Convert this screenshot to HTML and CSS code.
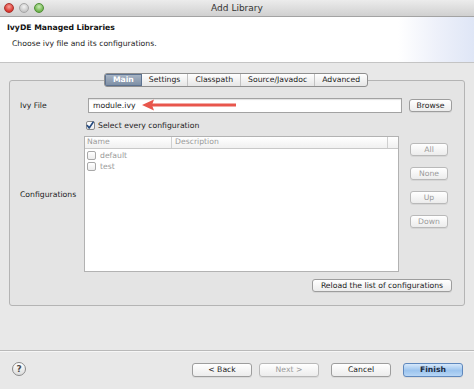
FILE: index.html
```html
<!DOCTYPE html>
<html lang="en">
<head>
  <meta charset="UTF-8" />
  <title>Add Library</title>
  <link rel="stylesheet" href="styles.css">
</head>
<body>

<div class="window">

  <div class="titlebar">
    <div class="lights">
      <span class="light close"></span>
      <span class="light mini"></span>
      <span class="light zoom"></span>
    </div>
    <div class="title">Add Library</div>
    <div></div>
  </div>

  <div class="banner">
    <h1>IvyDE Managed Libraries</h1>
    <p>Choose ivy file and its configurations.</p>
  </div>

  <div class="content">
    <fieldset class="folder">
      <legend class="tabs">
        <span class="tab active">Main</span>
        <span class="tab">Settings</span>
        <span class="tab">Classpath</span>
        <span class="tab">Source/Javadoc</span>
        <span class="tab">Advanced</span>
      </legend>

      <div class="ivy-row">
        <span class="field-label">Ivy File</span>
        <div class="input-wrap">
          <div class="input">module.ivy</div>
          <!-- red annotation arrow drawn over the field -->
          <svg class="arrow" width="96" height="12" viewBox="0 0 96 12">
            <path d="M95 6 H10" stroke="#e8564c" stroke-width="3" fill="none"/>
            <path d="M1 6 L13 0.5 L11 6 L13 11.5 Z" fill="#e8564c"/>
          </svg>
        </div>
        <button class="btn browse">Browse</button>
      </div>

      <div class="check-row">
        <span class="checkbox checked">
          <svg width="9" height="9" viewBox="0 0 9 9">
            <path d="M1.5 4.5 L3.6 7.3 L8 0.8" stroke="#244a80" stroke-width="1.8" fill="none" stroke-linecap="round" stroke-linejoin="round"/>
          </svg>
        </span>
        <span>Select every configuration</span>
      </div>

      <div class="config-row">
        <span class="field-label config-label">Configurations</span>
        <div class="table">
          <div class="table-head">
            <span class="col-name">Name</span>
            <span class="col-desc">Description</span>
            <span class="col-end"></span>
          </div>
          <div class="table-row"><span class="checkbox"></span>default</div>
          <div class="table-row"><span class="checkbox"></span>test</div>
        </div>
        <div class="side-buttons">
          <button class="btn disabled">All</button>
          <button class="btn disabled">None</button>
          <button class="btn disabled">Up</button>
          <button class="btn disabled">Down</button>
        </div>
      </div>

      <div class="reload-row">
        <button class="btn reload">Reload the list of configurations</button>
      </div>
    </fieldset>
  </div>

  <div class="footer">
    <span class="help">?</span>
    <div class="nav-buttons">
      <button class="btn nav">&lt; Back</button>
      <button class="btn nav disabled">Next &gt;</button>
      <button class="btn nav cancel">Cancel</button>
      <button class="btn nav finish">Finish</button>
    </div>
  </div>

</div>

</body>
</html>
```

FILE: styles.css
```css
body {
  margin: 0;
  padding: 0;
  font-family: "DejaVu Sans", Verdana, sans-serif;
  font-size: 7.7px;
  color: #1c1c1c;
  background: #e8e8e8;
}

.window {
  width: 474px;
  height: 389px;
  display: flex;
  flex-direction: column;
  background: #e8e8e8;
  overflow: hidden;
}

/* title bar */

.titlebar {
  height: 16px;
  display: grid;
  grid-template-columns: 1fr auto 1fr;
  align-items: center;
  background: linear-gradient(#ececec, #d0d0d0);
  border-bottom: 1px solid #a3a3a3;
}

.lights {
  display: flex;
  gap: 5px;
  padding-left: 4px;
}

.light {
  width: 10px;
  height: 10px;
  border-radius: 50%;
  box-sizing: border-box;
}

.light.close {
  background: radial-gradient(circle at 50% 35%, #f7a09a, #d9342c 70%);
  border: 1px solid #a8342e;
}

.light.mini {
  background: radial-gradient(circle at 50% 35%, #f2f2f2, #c6c6c6 70%);
  border: 1px solid #a6a6a6;
}

.light.zoom {
  background: radial-gradient(circle at 50% 35%, #c8ecb5, #6fb34d 70%);
  border: 1px solid #4f8e36;
}

.title {
  font-size: 9px;
  color: #333;
}

/* banner */

.banner {
  height: 46px;
  box-sizing: border-box;
  padding: 6px 0 0 7px;
  background: linear-gradient(to right, #ffffff 84%, #eef1fa 92%, #dfe6f6 100%);
  border-bottom: 1px solid #c4c4c4;
}

.banner h1 {
  margin: 0;
  font-size: 7.7px;
  line-height: 10px;
  font-weight: bold;
  color: #111;
}

.banner p {
  margin: 6px 0 0 5px;
  line-height: 10px;
}

/* tab folder */

.content {
  height: 287px;
  box-sizing: border-box;
  padding: 10px 9px 0;
}

.folder {
  margin: 0;
  min-width: 0;
  padding: 11px 12px 13px 10px;
  border: 1px solid #b4b4b4;
  border-radius: 3px;
  background: #e4e4e4;
}

.tabs {
  margin: 0 auto;
  padding: 0;
  display: flex;
  height: 14px;
  box-sizing: border-box;
  border: 1px solid #8f8f8f;
  border-radius: 3px;
  background: linear-gradient(#ffffff, #e6e6e6);
  overflow: hidden;
}

.tab {
  line-height: 12px;
  padding: 0 7px;
  border-left: 1px solid #c2c2c2;
}

.tab:first-child {
  border-left: none;
}

.tab.active {
  padding: 0 8px;
  color: #fff;
  font-weight: bold;
  background: linear-gradient(#aab7c7, #7a8ca3);
  box-shadow: inset 0 0 0 1px #5d7290;
}

.tab.active + .tab {
  border-left: none;
}

.field-label {
  width: 68px;
  flex-shrink: 0;
}

.ivy-row {
  height: 15px;
  display: flex;
  align-items: center;
}

.input-wrap {
  position: relative;
  width: 314px;
}

.input {
  height: 15px;
  box-sizing: border-box;
  padding: 0 4px;
  line-height: 13px;
  background: #fff;
  border: 1px solid #a2a2a2;
  box-shadow: inset 0 1px 1px rgba(0,0,0,0.12);
}

.arrow {
  position: absolute;
  left: 53px;
  top: 1px;
}

.btn {
  font-family: inherit;
  font-size: 7.7px;
  color: #1c1c1c;
  height: 13px;
  box-sizing: border-box;
  padding: 0;
  line-height: 11px;
  background: linear-gradient(#ffffff, #ececec);
  border: 1px solid #9d9d9d;
  border-radius: 3px;
  box-shadow: 0 1px 0 rgba(0,0,0,0.06);
}

.btn.disabled {
  color: #9a9a9a;
  border-color: #b9b9b9;
}

.browse {
  width: 43px;
  margin-left: 7px;
}

.check-row {
  margin-top: 7px;
  height: 10px;
  display: flex;
  align-items: center;
  gap: 3px;
  padding-left: 66px;
}

.checkbox {
  width: 9px;
  height: 9px;
  box-sizing: border-box;
  border: 1px solid #a8a8a8;
  border-radius: 2px;
  background: linear-gradient(#ffffff, #ededed);
  display: inline-flex;
  flex-shrink: 0;
}

.checkbox.checked {
  border-color: #8c8c8c;
}

.checkbox svg {
  margin: -1px 0 0 -1px;
}

.config-row {
  margin-top: 6px;
  height: 136px;
  display: flex;
}

.config-label {
  width: 64px;
  padding-top: 54px;
}

.table {
  width: 315px;
  box-sizing: border-box;
  background: #fff;
  border: 1px solid #b2b2b2;
  color: #9a9a9a;
}

.table-head {
  height: 11px;
  display: flex;
  line-height: 10px;
  background: linear-gradient(#ffffff, #f0f0f0);
  border-bottom: 1px solid #c8c8c8;
}

.col-name {
  width: 84px;
  padding-left: 2px;
  border-right: 1px solid #cfcfcf;
}

.col-desc {
  flex: 1;
  padding-left: 3px;
  border-right: 1px solid #cfcfcf;
}

.col-end {
  width: 10px;
}

.table-row {
  height: 11px;
  display: flex;
  align-items: center;
  gap: 4px;
  padding-left: 2px;
}

.table-head + .table-row {
  margin-top: 1px;
}

.side-buttons {
  margin-left: 11px;
  padding-top: 7px;
  display: flex;
  flex-direction: column;
  gap: 11px;
}

.side-buttons .btn {
  width: 38px;
}

.reload-row {
  margin-top: 7px;
  display: flex;
  justify-content: flex-end;
}

.reload {
  width: 140px;
}

/* footer */

.footer {
  flex: 1;
  display: flex;
  align-items: flex-start;
  padding: 12px 11px 0 12px;
  border-top: 1px solid #b9b9b9;
  box-shadow: inset 0 1px 0 #f6f6f6;
}

.help {
  width: 14px;
  height: 14px;
  margin-top: -1px;
  box-sizing: border-box;
  border: 1px solid #8a8a8a;
  border-radius: 50%;
  background: linear-gradient(#ffffff, #dcdcdc);
  color: #4a4a4a;
  font-weight: bold;
  font-size: 9px;
  line-height: 12px;
  text-align: center;
}

.nav-buttons {
  margin-left: auto;
  display: flex;
}

.nav {
  width: 60px;
  height: 14px;
  line-height: 12px;
}

.nav + .nav {
  margin-left: 7px;
}

.nav.cancel {
  margin-left: 12px;
}

.nav.finish {
  margin-left: 12px;
  font-weight: bold;
  color: #1b2a40;
  border-color: #5f88bd;
  background: linear-gradient(#d6e8fb, #9cc4ee 55%, #b7d6f6);
}
```
